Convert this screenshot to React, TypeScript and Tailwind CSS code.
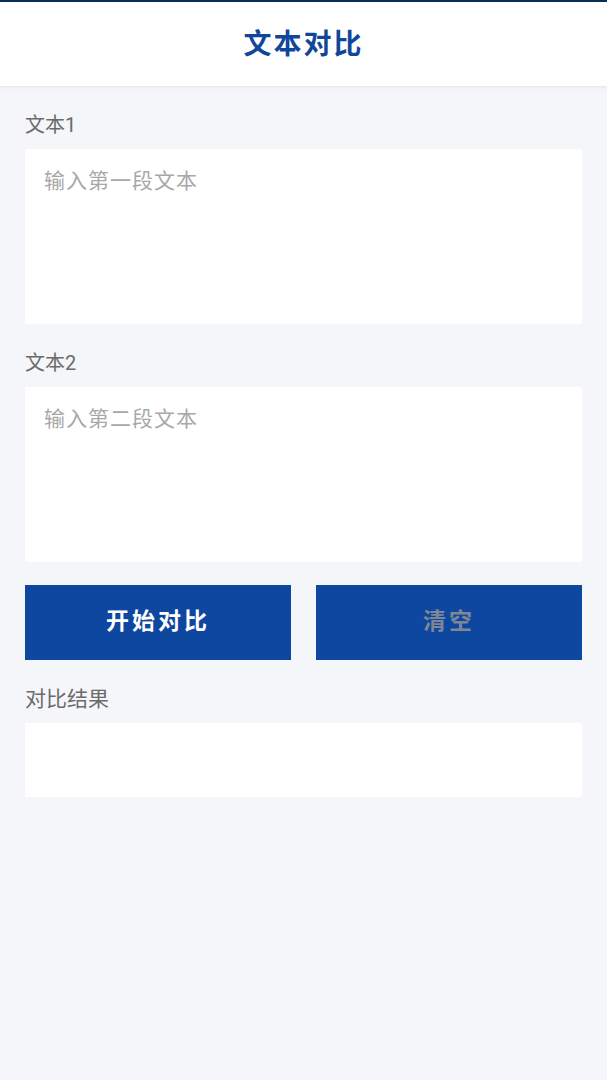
const font = "font-['Roboto','Noto_Sans_CJK_SC',sans-serif]";

function Field({ label, placeholder }: { label: string; placeholder: string }) {
  return (
    <div className="flex flex-col">
      <label className="h-6 text-[20px] leading-6 text-[#6b6b6b]">{label}</label>
      <textarea
        placeholder={placeholder}
        className="mt-3 h-[175px] resize-none rounded-[2px] bg-white px-[19px] pt-[20px] pb-[19px] text-[21px] leading-6 tracking-[1px] text-[#333] outline-none placeholder:text-[#a8a8a8]"
      />
    </div>
  );
}

export default function App() {
  return (
    <div className={`min-h-[1080px] bg-[#f5f6fa] ${font}`}>
      {/* Header */}
      <div className="border-t-2 border-[#0a2b5c] bg-white shadow-[0_1px_3px_rgba(0,0,0,0.08)]">
        <div className="flex h-[84px] items-center justify-center pt-[2px]">
          <h1 className="text-[28px] font-bold tracking-[2px] text-[#10479b]">文本对比</h1>
        </div>
      </div>

      <div className="flex flex-col gap-[27px] px-[25px] pt-[27px]">
        <Field label="文本1" placeholder="输入第一段文本" />
        <Field label="文本2" placeholder="输入第二段文本" />

        <div className="-mt-[4px] flex gap-[25px]">
          <button className="flex h-[75px] flex-1 items-center justify-center bg-[#0e47a0] text-[23px] font-bold tracking-[3px] text-white">
            开始对比
          </button>
          <button className="flex h-[75px] flex-1 items-center justify-center bg-[#0e47a0] text-[23px] font-bold tracking-[3px] text-[#7d8796]">
            清空
          </button>
        </div>

        <div className="flex flex-col">
          <span className="h-6 text-[21px] leading-6 text-[#6b6b6b]">对比结果</span>
          <div className="mt-3 h-[74px] rounded-[2px] bg-white" />
        </div>
      </div>
    </div>
  );
}
